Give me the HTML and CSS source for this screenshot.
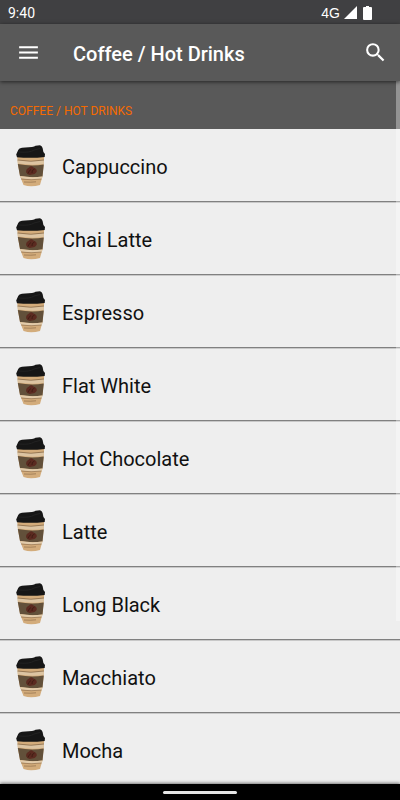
FILE: index.html
```html
<!DOCTYPE html>
<html lang="en">
<head>
    <meta charset="UTF-8">
    <meta name="viewport" content="width=device-width, initial-scale=1.0">
    <title>Coffee / Hot Drinks</title>
    <link rel="stylesheet" href="styles.css">
</head>

<body>

    <!-- shared cup icon -->
    <svg class="symbols" aria-hidden="true">
        <symbol id="cup" viewBox="0 0 30 42">
            <path d="M1.2 11 L28.2 11 L27.6 20 L26.5 31 L24 40 Q15 42.5 7.5 40 L4 31 L2 20 Z" fill="#d3ac7b"/>
            <path d="M1.5 15 Q15 17.5 28 15 L27.8 19 Q15 20.5 1.8 18.5 Z" fill="#dcc4a2"/>
            <path d="M1.5 15 Q15 17.5 28 15" fill="none" stroke="#6b5238" stroke-width="0.6"/>
            <path d="M1.8 19 Q15 21.5 27.8 19.5 L26.5 31.5 Q15 33 4 31 Z" fill="#62503a"/>
            <path d="M4 31 Q15 33 26.5 31.5 L25.8 34 Q15 35 5 33.5 Z" fill="#e2cbaa"/>
            <path d="M5 34 Q15 35.5 25.5 34 M8 37 Q15 37.5 20 36.8" fill="none" stroke="#745536" stroke-width="0.5"/>
            <path d="M10.2 27.5 Q9.5 24 13 22.5 Q15 20 17.5 22.5 Q21 23.5 20.8 26.5 Q19.5 29.5 16 29.5 Q12 31 10.2 27.5 Z" fill="#5b2a20"/>
            <path d="M12 28.5 Q12.5 26 15 24.5 M16 28 Q15.5 25 18.5 24" fill="none" stroke="#33190f" stroke-width="0.7"/>
            <path d="M1 12.2 L0.2 9.5 L2.2 5 Q3 3.2 6 2.8 L16 2 Q18.5 1.6 19.5 0.8 L24 0.3 Q26 1 26.6 3 L27.4 7 L29 9 L28.7 12 Q15 13.6 1 12.2 Z" fill="#161616"/>
            <path d="M3 7 Q14 8 18 5 L24 3.5" fill="none" stroke="#242424" stroke-width="0.8"/>
        </symbol>
    </svg>

    <div class="status-bar">
        <span class="clock">9:40</span>
        <div class="status-icons">
            <span class="network">4G</span>
            <svg width="13" height="13" viewBox="0 0 13 13"><path d="M13 0 V13 H0 Z" fill="#fff"/></svg>
            <svg class="battery" width="9" height="14" viewBox="0 0 9 14"><path d="M3 0 H6 V1 H8 Q9 1 9 2 V13 Q9 14 8 14 H1 Q0 14 0 13 V2 Q0 1 1 1 H3 Z" fill="#fff"/></svg>
        </div>
    </div>

    <header class="app-bar">
        <button class="icon-btn" aria-label="Menu">
            <svg width="25" height="25" viewBox="0 0 24 24"><path d="M3 18h18v-2H3v2zm0-5h18v-2H3v2zm0-7v2h18V6H3z" fill="#fff"/></svg>
        </button>
        <h1>Coffee / Hot Drinks</h1>
        <button class="icon-btn" aria-label="Search">
            <svg width="25" height="25" viewBox="0 0 24 24"><path d="M15.5 14h-.79l-.28-.27A6.47 6.47 0 0 0 16 9.5 6.5 6.5 0 1 0 9.5 16c1.61 0 3.09-.59 4.23-1.57l.27.28v.79l5 4.99L20.49 19l-4.99-5zm-6 0C7.01 14 5 11.99 5 9.5S7.01 5 9.5 5 14 7.01 14 9.5 11.99 14 9.5 14z" fill="#fff"/></svg>
        </button>
    </header>

    <main class="content">
        <h2 class="section-title">COFFEE / HOT DRINKS</h2>
        <ul class="drinks">
            <li><a href="#cappuccino"><svg class="cup"><use href="#cup"/></svg><span>Cappuccino</span></a></li>
            <li><a href="#chai-latte"><svg class="cup"><use href="#cup"/></svg><span>Chai Latte</span></a></li>
            <li><a href="#espresso"><svg class="cup"><use href="#cup"/></svg><span>Espresso</span></a></li>
            <li><a href="#flat-white"><svg class="cup"><use href="#cup"/></svg><span>Flat White</span></a></li>
            <li><a href="#hot-chocolate"><svg class="cup"><use href="#cup"/></svg><span>Hot Chocolate</span></a></li>
            <li><a href="#latte"><svg class="cup"><use href="#cup"/></svg><span>Latte</span></a></li>
            <li><a href="#long-black"><svg class="cup"><use href="#cup"/></svg><span>Long Black</span></a></li>
            <li><a href="#macchiato"><svg class="cup"><use href="#cup"/></svg><span>Macchiato</span></a></li>
            <li><a href="#mocha"><svg class="cup"><use href="#cup"/></svg><span>Mocha</span></a></li>
        </ul>
        <div class="scroll-thumb"></div>
    </main>

    <div class="nav-bar">
        <div class="nav-handle"></div>
    </div>

</body>
</html>
```

FILE: styles.css
```css
* {
    box-sizing: border-box;
}
body {
    font-family: Roboto, sans-serif;
    margin: 0;
    height: 100vh;
    display: flex;
    flex-direction: column;
    background: #eeeeee;
    color: #111;
}
.symbols {
    display: none;
}
.status-bar {
    flex: none;
    display: flex;
    justify-content: space-between;
    align-items: center;
    height: 24px;
    padding: 1px 28px 0 8px;
    background: #404042;
    color: #fff;
    font-size: 14px;
}
.status-icons {
    display: flex;
    align-items: center;
    gap: 4px;
}
.network {
    font-family: "Liberation Sans", Arial, sans-serif;
}
.battery {
    margin-left: 2px;
}
.app-bar {
    flex: none;
    display: flex;
    align-items: center;
    height: 57px;
    padding: 0 12px 0 16px;
    background: #595959;
    color: #fff;
    box-shadow: 0 1px 4px rgba(0, 0, 0, 0.6);
    z-index: 1;
}
.app-bar h1 {
    flex: 1;
    margin: 0 0 0 32px;
    padding-top: 2px;
    font-size: 20px;
    font-weight: 500;
}
.icon-btn {
    display: flex;
    padding: 0;
    border: none;
    background: none;
    cursor: pointer;
}
.content {
    flex: 1;
    min-height: 0;
    position: relative;
    overflow: hidden;
}
.section-title {
    display: flex;
    align-items: center;
    height: 48px;
    margin: 0;
    padding: 12px 10px 0;
    background: #595959;
    color: #f56a00;
    font-size: 12px;
    font-weight: 400;
}
.drinks {
    list-style: none;
    margin: 0;
    padding: 0;
}
.drinks a {
    display: flex;
    align-items: center;
    gap: 16px;
    height: 73px;
    padding: 2px 16px 0;
    border-bottom: 1px solid #808080;
    box-shadow: 0 1px 0 #c8c8c8;
    color: inherit;
    font-size: 20px;
    text-decoration: none;
}
.drinks span {
    padding-top: 2px;
}
.cup {
    width: 30px;
    height: 42px;
}
.scroll-thumb {
    position: absolute;
    top: 0;
    right: 0;
    width: 4px;
    height: 540px;
    background: rgba(255, 255, 255, 0.35);
}
.nav-bar {
    flex: none;
    display: flex;
    justify-content: center;
    align-items: center;
    height: 16px;
    background: #000;
    box-shadow: 0 -1px 3px rgba(0, 0, 0, 0.5);
    z-index: 1;
}
.nav-handle {
    width: 74px;
    height: 3px;
    border-radius: 2px;
    background: #e6e6e6;
}
```
